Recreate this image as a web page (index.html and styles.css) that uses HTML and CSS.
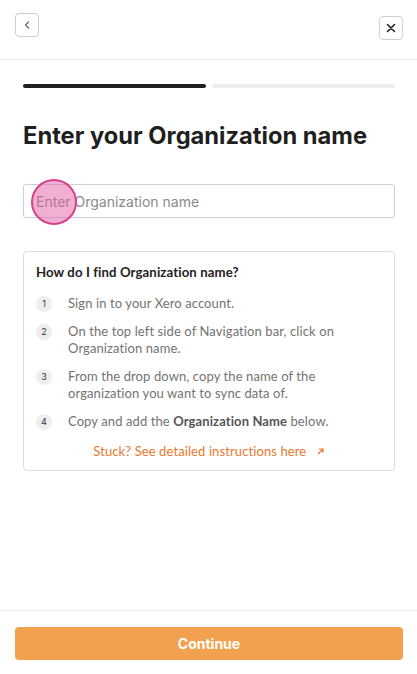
FILE: index.html
```html
<!DOCTYPE html>
<html>
<head>
<meta charset="utf-8">
<link rel="stylesheet" href="styles.css">
</head>
<body>
<div class="page">
  <header class="topbar">
    <button class="icon-btn back" aria-label="Back">
      <svg width="10" height="10" viewBox="0 0 10 10"><path d="M6.5 2 L3.5 5 L6.5 8" fill="none" stroke="#666" stroke-width="1.2" stroke-linecap="round" stroke-linejoin="round"/></svg>
    </button>
    <button class="icon-btn close" aria-label="Close">
      <svg width="10" height="10" viewBox="0 0 10 10"><path d="M1.5 1.5 L8.5 8.5 M8.5 1.5 L1.5 8.5" fill="none" stroke="#222" stroke-width="1.6" stroke-linecap="round"/></svg>
    </button>
  </header>
  <main class="content">
    <div class="progress">
      <div class="bar done"></div>
      <div class="bar"></div>
    </div>
    <h1 class="title">Enter your Organization name</h1>
    <div class="field">
      <input class="input" type="text" placeholder="Enter Organization name">
      <span class="touch"></span>
    </div>
    <section class="help">
      <h2 class="help-title">How do I find Organization name?</h2>
      <ol class="steps">
        <li class="step"><span class="num">1</span><span class="txt">Sign in to your Xero account.</span></li>
        <li class="step"><span class="num">2</span><span class="txt">On the top left side of Navigation bar, click on Organization name.</span></li>
        <li class="step"><span class="num">3</span><span class="txt">From the drop down, copy the name of the organization you want to sync data of.</span></li>
        <li class="step"><span class="num">4</span><span class="txt">Copy and add the <b>Organization Name</b> below.</span></li>
      </ol>
      <a class="link" href="#">Stuck? See detailed instructions here <svg width="9" height="9" viewBox="0 0 9 9"><path d="M2 7 L7 2 M3 2 H7 V6" fill="none" stroke="#e8772e" stroke-width="1.2"/></svg></a>
    </section>
  </main>
  <footer class="footer">
    <button class="continue">Continue</button>
  </footer>
</div>
</body>
</html>
```
FILE: styles.css
```css
* { box-sizing: border-box; }
html, body { margin: 0; padding: 0; background: #fff; }
body { font-family: "Inter", "Lato", sans-serif; color: #222; }
.page { width: 417px; height: 674px; display: flex; flex-direction: column; }
.topbar { height: 60px; border-bottom: 1px solid #ececec; display: flex; justify-content: space-between; align-items: flex-start; padding: 0 14px 0 15px; }
.icon-btn { width: 24px; height: 24px; border: 1px solid #cfcfcf; border-radius: 4px; background: #fff; padding: 0; display: flex; align-items: center; justify-content: center; }
.back { margin-top: 13px; }
.close { margin-top: 16px; }
.content { flex: 1; padding: 24px 22px 0 23px; }
.progress { display: flex; gap: 6px; }
.bar { flex: 1; height: 4px; border-radius: 2px; background: #eeeeee; }
.bar.done { background: #1f1f1f; }
.title { margin: 34px 0 0; font-size: 23.7px; line-height: 28px; font-weight: 700; letter-spacing: 0; color: #1f1f1f; }
.field { position: relative; margin-top: 34px; }
.input { display: block; width: 100%; height: 34px; border: 1px solid #cfcfcf; border-radius: 3px; padding: 0 12px; font: 14px "Inter", "Lato", sans-serif; color: #222; outline: none; }
.input::placeholder { color: #8a8a8a; }
.touch { position: absolute; left: 8px; top: -5px; width: 46px; height: 46px; border-radius: 50%; background: rgba(226, 96, 168, 0.5); border: 2px solid #d4428c; pointer-events: none; }
.help { margin-top: 33px; border: 1px solid #dedede; border-radius: 4px; padding: 12px 12px 10px; font-family: "Lato", sans-serif; }
.help-title { margin: 0; font-size: 13.2px; line-height: 17px; font-weight: 700; color: #222; letter-spacing: 0.1px; }
.steps { list-style: none; margin: 14px 0 0; padding: 0; display: flex; flex-direction: column; gap: 11px; }
.step { display: flex; gap: 16px; align-items: flex-start; }
.num { flex: none; width: 16px; height: 16px; border-radius: 50%; background: #eeeeee; font-size: 9px; line-height: 16px; text-align: center; color: #333; margin-top: 1px; font-family: "Inter", sans-serif; }
.txt { font-size: 13px; line-height: 17px; color: #737373; letter-spacing: 0.1px; }
.txt b { color: #555; font-weight: 700; }
.link { display: block; margin-top: 13px; text-align: center; font-size: 13px; line-height: 17px; color: #e8772e; text-decoration: none; letter-spacing: 0.1px; }
.link svg { margin-left: 6px; }
.footer { border-top: 1px solid #ececec; padding: 16px 14px 14px 15px; }
.continue { display: block; width: 100%; height: 33px; border: none; border-radius: 4px; background: #f2a24e; color: #fff; font: 700 14px "Inter", "Lato", sans-serif; }
```
